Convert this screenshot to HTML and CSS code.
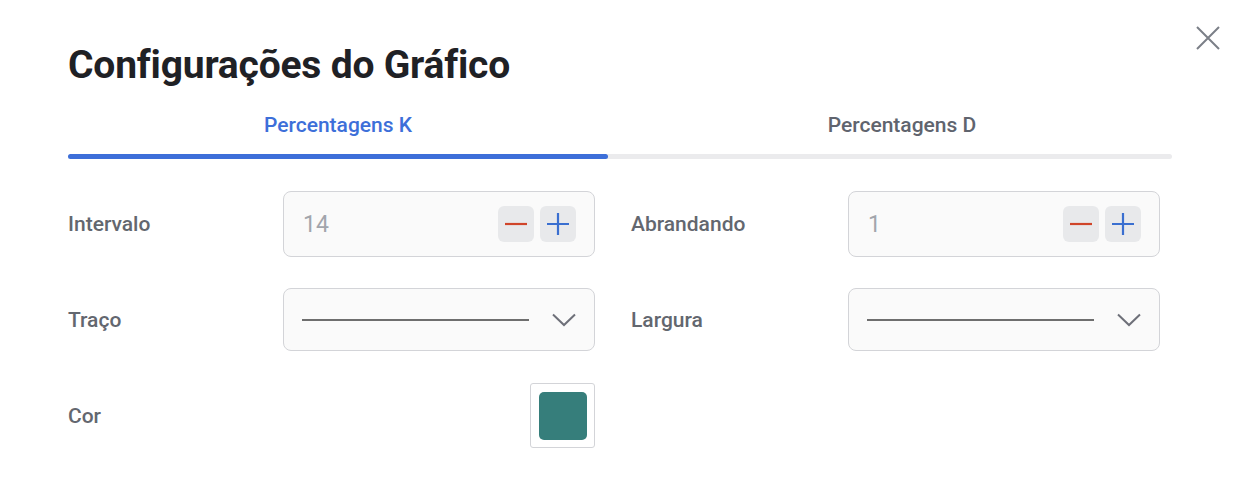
FILE: index.html
```html
<!DOCTYPE html>
<html lang="pt">
<head>
<meta charset="utf-8">
<title>Configurações do Gráfico</title>
<link rel="stylesheet" href="styles.css">
</head>
<body>
<div class="dialog">
  <button class="close" aria-label="Fechar">
    <svg width="26" height="26" viewBox="0 0 26 26"><path d="M2 2L24 24M24 2L2 24" stroke="#7b7f87" stroke-width="2" fill="none"/></svg>
  </button>
  <h1 class="title">Configurações do Gráfico</h1>
  <div class="tabs">
    <div class="tab active">Percentagens K</div>
    <div class="tab second">Percentagens D</div>
  </div>
  <div class="track"><div class="track-fill"></div></div>
  <div class="form">
    <div class="row r1">
      <div class="field">
        <span class="label">Intervalo</span>
        <div class="box stepper">
          <span class="value">14</span>
          <div class="btns">
            <span class="btn"><svg width="22" height="22" viewBox="0 0 22 22"><path d="M0 11H22" stroke="#d0452a" stroke-width="2.2"/></svg></span>
            <span class="btn"><svg width="22" height="22" viewBox="0 0 22 22"><path d="M0 11H22M11 0V22" stroke="#3a6fd0" stroke-width="2.2"/></svg></span>
          </div>
        </div>
      </div>
      <div class="field">
        <span class="label">Abrandando</span>
        <div class="box stepper">
          <span class="value">1</span>
          <div class="btns">
            <span class="btn"><svg width="22" height="22" viewBox="0 0 22 22"><path d="M0 11H22" stroke="#d0452a" stroke-width="2.2"/></svg></span>
            <span class="btn"><svg width="22" height="22" viewBox="0 0 22 22"><path d="M0 11H22M11 0V22" stroke="#3a6fd0" stroke-width="2.2"/></svg></span>
          </div>
        </div>
      </div>
    </div>
    <div class="row r2">
      <div class="field">
        <span class="label">Traço</span>
        <div class="box select">
          <span class="line"></span>
          <svg class="chev" width="24" height="14" viewBox="0 0 24 14"><path d="M1 1.5L12 12L23 1.5" stroke="#6e7079" stroke-width="2" fill="none"/></svg>
        </div>
      </div>
      <div class="field">
        <span class="label">Largura</span>
        <div class="box select">
          <span class="line"></span>
          <svg class="chev" width="24" height="14" viewBox="0 0 24 14"><path d="M1 1.5L12 12L23 1.5" stroke="#6e7079" stroke-width="2" fill="none"/></svg>
        </div>
      </div>
    </div>
    <div class="row r3">
      <div class="field">
        <span class="label">Cor</span>
        <div class="colorbox"><span class="swatch"></span></div>
      </div>
      <div class="field"></div>
    </div>
  </div>
</div>
</body>
</html>
```
FILE: styles.css
```css
* { box-sizing: border-box; }
html, body { margin: 0; padding: 0; background: #fff; }
body { font-family: Roboto, "Noto Sans", Arial, sans-serif; width: 1240px; height: 498px; overflow: hidden; }
.dialog { position: relative; padding: 41px 68px 0 68px; }
.close { position: absolute; top: 25px; left: 1195px; width: 26px; height: 26px; padding: 0; border: 0; background: none; cursor: pointer; }
.close svg { display: block; }
.title { margin: 0; font-size: 39px; font-weight: 700; color: #1f2125; line-height: 48px; letter-spacing: -0.2px; }
.tabs { display: flex; margin-top: 20px; height: 33px; }
.tab { width: 540px; text-align: center; font-size: 21px; font-weight: 500; color: #60646e; line-height: 33px; }
.tab.second { width: 564px; padding-left: 24px; }
.tab.active { color: #3d6fd9; }
.track { margin-top: 12px; height: 5px; border-radius: 3px; background: #ebebed; }
.track-fill { width: 540px; height: 5px; border-radius: 3px; background: #3d6fd9; }
.form { margin-top: 32px; width: 1092px; display: flex; flex-direction: column; }
.row { display: flex; gap: 36px; }
.r2 { margin-top: 31px; }
.r3 { margin-top: 32px; }
.field { display: flex; align-items: center; justify-content: space-between; width: 529px; }
.field:first-child { width: 527px; }
.label { font-size: 21px; font-weight: 500; color: #63676f; }
.box { width: 312px; border: 1px solid #d3d4d8; border-radius: 8px; background: #fafafa; display: flex; align-items: center; }
.stepper { height: 66px; padding: 0 18px 0 19px; justify-content: space-between; }
.value { font-size: 23px; color: #a2a5ac; }
.btns { display: flex; gap: 6px; }
.btn { width: 36px; height: 36px; border-radius: 6px; background: #e8e9eb; display: flex; align-items: center; justify-content: center; }
.btn svg { display: block; }
.select { height: 63px; padding: 0 18px 0 18px; justify-content: space-between; }
.line { display: block; width: 227px; height: 2px; background: #6e6e6e; }
.chev { display: block; }
.colorbox { width: 65px; height: 65px; border: 1px solid #d3d4d8; border-radius: 3px; background: #fff; display: flex; align-items: center; justify-content: center; margin-left: auto; }
.swatch { width: 48px; height: 48px; border-radius: 5px; background: #367e7b; }
```
